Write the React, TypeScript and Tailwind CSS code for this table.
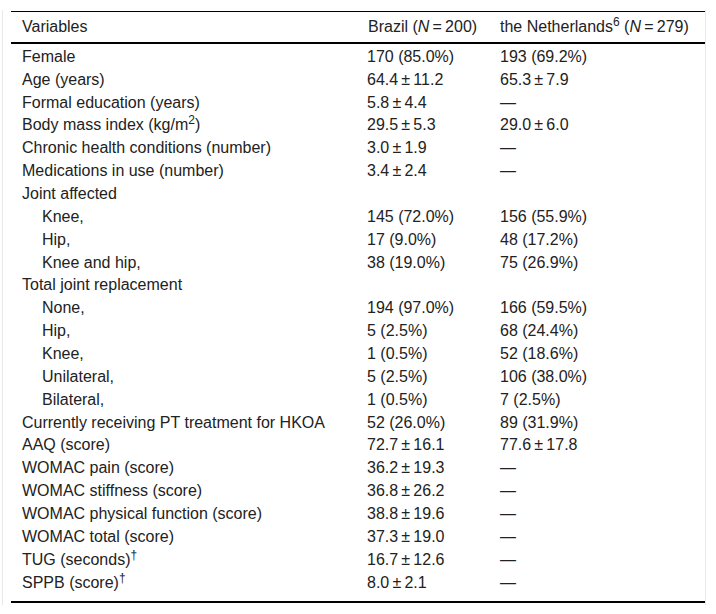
import React from 'react'

type Row = { label: React.ReactNode; brazil: string; nl: string; indent?: boolean }

const T = '\u2009'

const rows: Row[] = [
    { label: 'Female', brazil: '170 (85.0%)', nl: '193 (69.2%)' },
    { label: 'Age (years)', brazil: `64.4${T}±${T}11.2`, nl: `65.3${T}±${T}7.9` },
    { label: 'Formal education (years)', brazil: `5.8${T}±${T}4.4`, nl: '—' },
    { label: <>Body mass index (kg/m<sup>2</sup>)</>, brazil: `29.5${T}±${T}5.3`, nl: `29.0${T}±${T}6.0` },
    { label: 'Chronic health conditions (number)', brazil: `3.0${T}±${T}1.9`, nl: '—' },
    { label: 'Medications in use (number)', brazil: `3.4${T}±${T}2.4`, nl: '—' },
    { label: 'Joint affected', brazil: '', nl: '' },
    { label: 'Knee,', brazil: '145 (72.0%)', nl: '156 (55.9%)', indent: true },
    { label: 'Hip,', brazil: '17 (9.0%)', nl: '48 (17.2%)', indent: true },
    { label: 'Knee and hip,', brazil: '38 (19.0%)', nl: '75 (26.9%)', indent: true },
    { label: 'Total joint replacement', brazil: '', nl: '' },
    { label: 'None,', brazil: '194 (97.0%)', nl: '166 (59.5%)', indent: true },
    { label: 'Hip,', brazil: '5 (2.5%)', nl: '68 (24.4%)', indent: true },
    { label: 'Knee,', brazil: '1 (0.5%)', nl: '52 (18.6%)', indent: true },
    { label: 'Unilateral,', brazil: '5 (2.5%)', nl: '106 (38.0%)', indent: true },
    { label: 'Bilateral,', brazil: '1 (0.5%)', nl: '7 (2.5%)', indent: true },
    { label: 'Currently receiving PT treatment for HKOA', brazil: '52 (26.0%)', nl: '89 (31.9%)' },
    { label: 'AAQ (score)', brazil: `72.7${T}±${T}16.1`, nl: `77.6${T}±${T}17.8` },
    { label: 'WOMAC pain (score)', brazil: `36.2${T}±${T}19.3`, nl: '—' },
    { label: 'WOMAC stiffness (score)', brazil: `36.8${T}±${T}26.2`, nl: '—' },
    { label: 'WOMAC physical function (score)', brazil: `38.8${T}±${T}19.6`, nl: '—' },
    { label: 'WOMAC total (score)', brazil: `37.3${T}±${T}19.0`, nl: '—' },
    { label: <>TUG (seconds)<sup>†</sup></>, brazil: `16.7${T}±${T}12.6`, nl: '—' },
    { label: <>SPPB (score)<sup>†</sup></>, brazil: `8.0${T}±${T}2.1`, nl: '—' },
]

export default function App() {
    return (
        <div className="min-h-[614px] bg-white pt-[10px] font-['Liberation_Sans',Arial,sans-serif] text-[16px] leading-[22.86px] text-[#222]">
            <div className="ml-[2px] w-[704px] border-x border-[#e8e8e8] pl-[8px] pt-px pb-[2px]">
                <table className="w-full border-collapse">
                    <thead>
                        <tr className="border-t border-b-2 border-t-black border-b-black">
                            <th className="w-[345px] pl-[11px] pt-[4px] pb-[3px] text-left font-normal">Variables</th>
                            <th className="w-[133px] pl-[12px] pt-[4px] pb-[3px] text-left font-normal">
                                Brazil (<i>N</i>{T}={T}200)
                            </th>
                            <th className="pl-[11px] pt-[4px] pb-[3px] text-left font-normal">
                                the Netherlands<sup>6</sup> (<i>N</i>{T}={T}279)
                            </th>
                        </tr>
                    </thead>
                    <tbody className="border-b-2 border-black">
                        {rows.map((r, i) => {
                            const pad = i === 0 ? 'pt-[2px]' : i === rows.length - 1 ? 'pb-[7px]' : ''
                            return (
                                <tr key={i}>
                                    <td className={`p-0 align-top ${r.indent ? 'pl-[31px]' : 'pl-[11px]'} ${pad}`}>{r.label}</td>
                                    <td className={`p-0 pl-[11px] align-top ${pad}`}>{r.brazil}</td>
                                    <td className={`p-0 pl-[11px] align-top ${pad}`}>{r.nl}</td>
                                </tr>
                            )
                        })}
                    </tbody>
                </table>
            </div>
        </div>
    )
}
